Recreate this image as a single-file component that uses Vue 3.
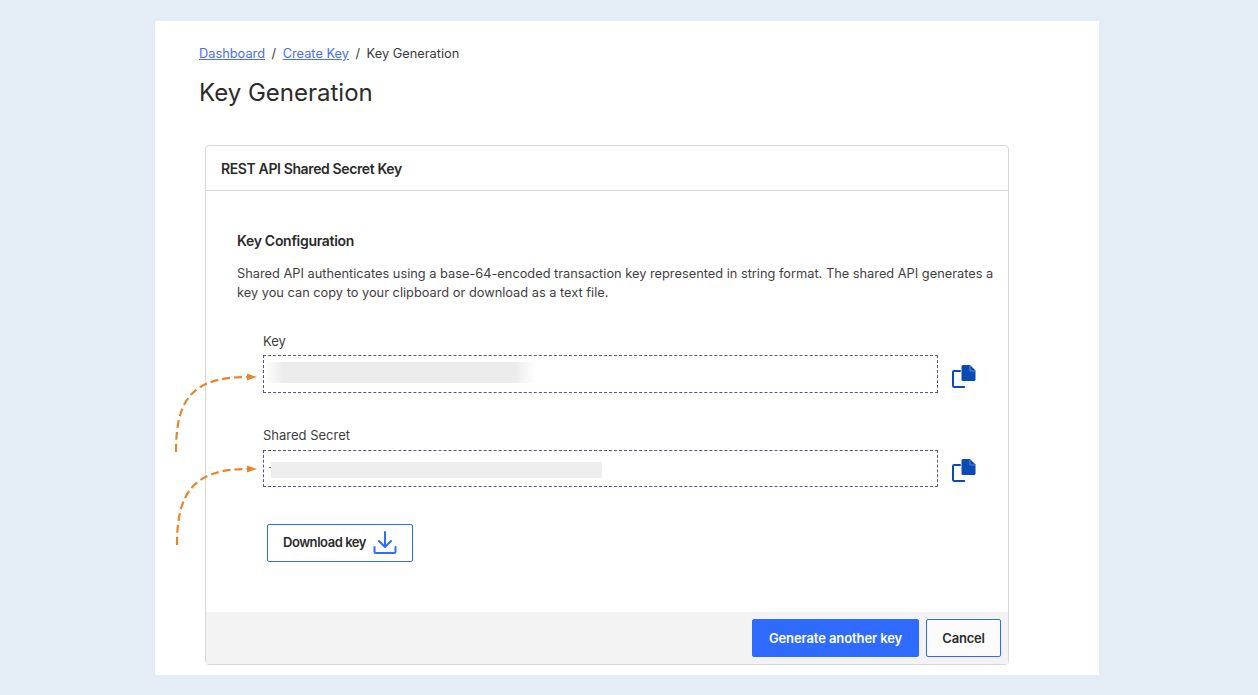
<template>
  <div class="page">
    <div class="panel">
      <nav class="crumbs">
        <a href="#">Dashboard</a>
        <span class="sep">/</span>
        <a href="#">Create Key</a>
        <span class="sep">/</span>
        <span>Key Generation</span>
      </nav>
      <h1 class="title">Key Generation</h1>

      <section class="card">
        <!-- hand drawn arrows sit over the card edge -->
        <svg class="arrows" width="100" height="200" viewBox="0 0 100 200" fill="none">
          <path d="M1 89C1 40 14 14 72 14" stroke="#e8852c" stroke-width="2.2" stroke-dasharray="8 4" />
          <path d="M82 14L72 10.5V17.5Z" fill="#e8852c" />
          <path d="M2 182C2 134 15 106 72 106" stroke="#e8852c" stroke-width="2.2" stroke-dasharray="8 4" />
          <path d="M82 106L72 102.5V109.5Z" fill="#e8852c" />
        </svg>

        <header class="card-head">REST API Shared Secret Key</header>
        <div class="card-body">
          <h2 class="sub">Key Configuration</h2>
          <p class="desc">
            Shared API authenticates using a base-64-encoded transaction key represented in string format. The shared API generates a key you can copy to your clipboard or download as a text file.
          </p>

          <div v-for="f in fields" :key="f.label" class="field">
            <label class="label">{{ f.label }}</label>
            <div class="row">
              <div class="box" :class="f.cls">
                <div class="smear" :style="{ width: f.width + 'px' }"></div>
              </div>
              <svg class="copy" width="24" height="24" viewBox="0 0 24 24">
                <path d="M8 7H2.2A1.2 1.2 0 0 0 1 8.2V21.8A1.2 1.2 0 0 0 2.2 23H12.2" fill="none" stroke="#0b49b5" stroke-width="2" stroke-linecap="round" />
                <path d="M11 1H18L23.5 6.5V15.5A1.5 1.5 0 0 1 22 17H11A1.5 1.5 0 0 1 9.5 15.5V2.5A1.5 1.5 0 0 1 11 1Z" fill="#0b49b5" />
                <path d="M18 1.5V7H23" fill="none" stroke="#5f8ad6" stroke-width="1" />
              </svg>
            </div>
          </div>

          <button class="btn download">
            <span class="download-text">Download key</span>
            <svg width="24" height="23" viewBox="0 0 24 23" fill="none" stroke="#2f6bff" stroke-width="2" stroke-linecap="round" stroke-linejoin="round">
              <path d="M12 1V15.5M6 10L12 16L18 10" />
              <path d="M1.5 16V20.5A1.5 1.5 0 0 0 3 22H21A1.5 1.5 0 0 0 22.5 20.5V16" />
            </svg>
          </button>
        </div>
        <footer class="card-foot">
          <button class="btn primary">Generate another key</button>
          <button class="btn cancel">Cancel</button>
        </footer>
      </section>
    </div>
  </div>
</template>

<script setup>
const fields = [
  { label: 'Key', width: 270, cls: 'soft' },
  { label: 'Shared Secret', width: 331, cls: 'hard' }
]
</script>

<style>
html, body {
  margin: 0;
  background: #e4ecf6;
}
</style>

<style scoped>
.page {
  height: 695px;
  padding: 21px 0 0 155px;
  box-sizing: border-box;
  overflow: hidden;
  font-family: Inter, "Liberation Sans", sans-serif;
  color: #2b2b2b;
}

.panel {
  width: 944px;
  height: 654px;
  box-sizing: border-box;
  background: #fff;
  padding: 24px 90px 0 44px;
}

.crumbs {
  display: flex;
  gap: 6.5px;
  font-size: 12.8px;
  line-height: 17px;
  color: #3a3a3a;
}

.crumbs a {
  color: #4a6cf7;
}

.title {
  margin: 15px 0 0;
  font-size: 24px;
  line-height: 32px;
  font-weight: 400;
  color: #2b2b2b;
}

.card {
  position: relative;
  margin: 36px 0 0 6px;
  width: 804px;
  height: 520px;
  box-sizing: border-box;
  border: 1px solid #d8d8d8;
  border-radius: 4px;
  display: flex;
  flex-direction: column;
}

.arrows {
  position: absolute;
  left: -31px;
  top: 217px;
}

.card-head {
  height: 44px;
  padding-left: 15px;
  display: flex;
  align-items: center;
  font-size: 14px;
  font-weight: 600;
  letter-spacing: -0.38px;
  border-bottom: 1px solid #d8d8d8;
}

.card-body {
  flex: 1;
  padding: 41px 9px 0 31px;
}

.sub {
  margin: 0;
  font-size: 14px;
  line-height: 18px;
  font-weight: 600;
  letter-spacing: -0.3px;
}

.desc {
  margin: 14px 0 0;
  font-size: 12.8px;
  line-height: 19px;
  color: #3f3f3f;
}

.field {
  margin: 31px 0 0 26px;
}

.field + .field {
  margin-top: 34px;
}

.label {
  display: block;
  font-size: 13px;
  line-height: 17px;
  margin-bottom: 5px;
  color: #3f3f3f;
}

.field + .field .label {
  margin-bottom: 6px;
}

.row {
  display: flex;
  align-items: center;
  gap: 14px;
}

.box {
  width: 675px;
  height: 38px;
  box-sizing: border-box;
  border: 1px dashed #5b5580;
  padding: 6px 6px;
}

.smear {
  height: 21px;
}

.box.soft {
  padding-left: 1px;
}

.box.soft .smear {
  background: linear-gradient(90deg, #fff 0, #ececec 18px, #ececec 250px, #fff 100%);
}

.box.hard {
  height: 37px;
  padding: 11px 0 0 7px;
  background: linear-gradient(#8a7a5a, #8a7a5a) no-repeat 5px 16px / 2px 1px;
}

.box.hard .smear {
  height: 16px;
  background: #eeeeee;
}

.copy {
  margin-top: 4px;
}

.hard + .copy {
  margin-top: 3px;
}

.btn {
  font-family: inherit;
  font-size: 13px;
  font-weight: 600;
  letter-spacing: -0.2px;
  border-radius: 2px;
  border: 1px solid #2f6bff;
  background: #fff;
  color: #2b2b2b;
  height: 38px;
  box-sizing: border-box;
  cursor: pointer;
}

.download {
  margin: 37px 0 0 30px;
  width: 146px;
  display: flex;
  align-items: center;
  justify-content: center;
  gap: 7px;
  padding: 0 0 1px;
  letter-spacing: -0.45px;
}

.download-text {
  margin-bottom: 1px;
}

.card-foot {
  height: 52px;
  background: #f3f3f3;
  display: flex;
  justify-content: flex-end;
  align-items: flex-start;
  gap: 7px;
  padding: 7px 7px 0 0;
  box-sizing: border-box;
}

.primary {
  width: 167px;
  background: #2f6bff;
  color: #fff;
  letter-spacing: -0.1px;
}

.cancel {
  width: 75px;
  background: #fbfbfb;
}
</style>
